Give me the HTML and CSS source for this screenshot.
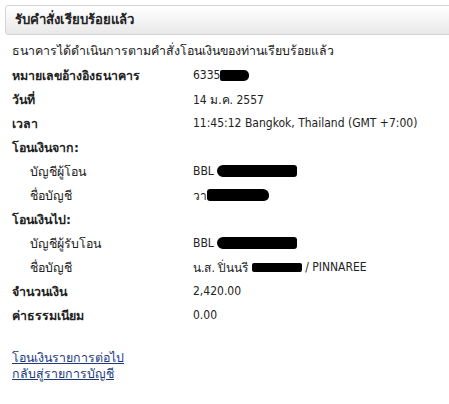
FILE: index.html
```html
<!DOCTYPE html>
<html lang="th">
<head>
<meta charset="utf-8">
<link rel="stylesheet" href="styles.css">
</head>
<body>
<div class="page">
  <div class="header">รับคำสั่งเรียบร้อยแล้ว</div>
  <div class="intro">ธนาคารได้ดำเนินการตามคำสั่งโอนเงินของท่านเรียบร้อยแล้ว</div>
  <div class="rows">
    <div class="row"><div class="label bold">หมายเลขอ้างอิงธนาคาร</div><div class="value">6335<span class="redact r1"></span></div></div>
    <div class="row"><div class="label bold">วันที่</div><div class="value">14 ม.ค. 2557</div></div>
    <div class="row"><div class="label bold">เวลา</div><div class="value">11:45:12 Bangkok, Thailand (GMT +7:00)</div></div>
    <div class="row"><div class="label bold">โอนเงินจาก:</div></div>
    <div class="row"><div class="label sub">บัญชีผู้โอน</div><div class="value">BBL <span class="redact r2"></span></div></div>
    <div class="row"><div class="label sub">ชื่อบัญชี</div><div class="value">วา<span class="redact r3"></span></div></div>
    <div class="row"><div class="label bold">โอนเงินไป:</div></div>
    <div class="row"><div class="label sub">บัญชีผู้รับโอน</div><div class="value">BBL <span class="redact r2"></span></div></div>
    <div class="row"><div class="label sub">ชื่อบัญชี</div><div class="value">น.ส. ปิ่นนรี <span class="redact r4"></span> / PINNAREE</div></div>
    <div class="row"><div class="label bold">จำนวนเงิน</div><div class="value">2,420.00</div></div>
    <div class="row"><div class="label bold">ค่าธรรมเนียม</div><div class="value">0.00</div></div>
  </div>
  <div class="links">
    <a href="#">โอนเงินรายการต่อไป</a>
    <a href="#">กลับสู่รายการบัญชี</a>
  </div>
</div>
</body>
</html>
```
FILE: styles.css
```css
html, body {
  margin: 0;
  padding: 0;
  background: #fff;
  overflow: hidden;
}
body {
  font-family: Tahoma, "DejaVu Sans", "Noto Sans", sans-serif;
  font-size: 12px;
  color: #222;
}
.page {
  padding: 5px 0 0 5px;
}
.header {
  height: 28px;
  line-height: 28px;
  padding-left: 9px;
  margin-right: -10px;
  border: 1px solid #d4d4d4;
  border-radius: 3px;
  background: linear-gradient(#ffffff, #e9e9e9);
  font-weight: bold;
  font-size: 13.2px;
  color: #222;
}
.intro {
  padding: 7px 0 0 7px;
  height: 21px;
  line-height: 18px;
  font-size: 12.4px;
}
.rows {
  padding: 0 0 0 7px;
}
.row {
  display: flex;
  height: 24px;
  align-items: center;
}
.label {
  width: 181px;
  flex: none;
  font-size: 12.4px;
}
.bold {
  font-weight: bold;
}
.sub {
  padding-left: 18px;
  width: 163px;
}
.value {
  display: flex;
  align-items: center;
  white-space: pre;
  font-family: "DejaVu Sans Condensed", "DejaVu Sans", sans-serif;
  font-stretch: condensed;
}
.redact {
  display: inline-block;
  background: #000;
  height: 11px;
  border-radius: 2px 5px 5px 2px;
}
.r1 { width: 29px; }
.r2 { width: 80px; height: 12px; border-radius: 6px 3px 3px 6px; }
.r3 { width: 62px; height: 12px; border-radius: 3px 6px 5px 3px; }
.r4 { width: 50px; height: 9px; border-radius: 2px; }
.links {
  padding: 23px 0 0 7px;
  display: flex;
  flex-direction: column;
  font-size: 12.4px;
}
.links a {
  color: #1e3a80;
  text-decoration: underline;
  line-height: 16px;
  width: max-content;
}
```
